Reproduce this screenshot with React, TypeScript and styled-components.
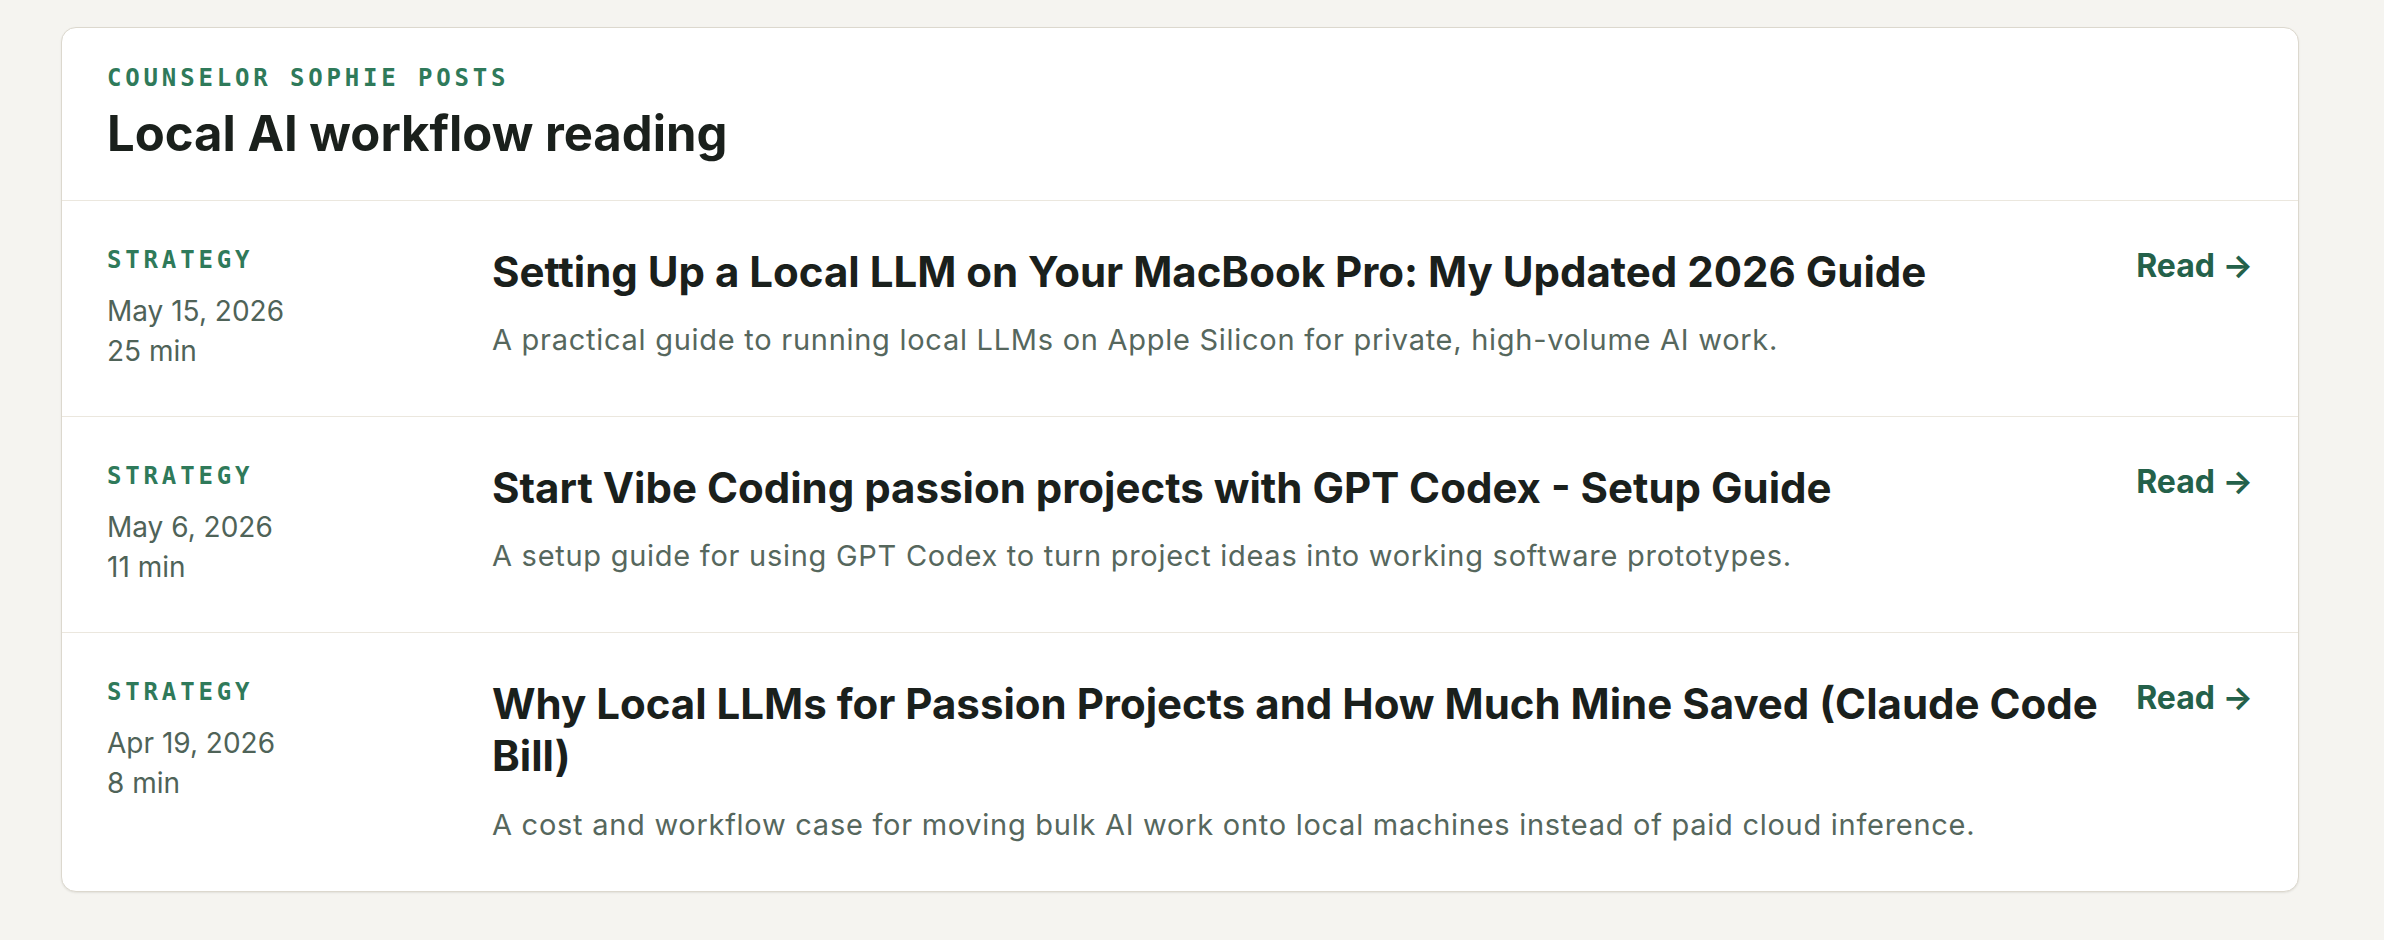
import React from 'react';
import styled, { createGlobalStyle } from 'styled-components';

const GlobalStyle = createGlobalStyle`
    html, body {
        margin: 0;
        padding: 0;
        background: #f5f4f0;
    }
    body {
        font-family: Inter, 'Noto Sans', sans-serif;
        color: #1a201c;
    }
`;

const Page = styled.div`
    padding: 27px 61px 40px;
`;

const Card = styled.section`
    max-width: 2236px;
    background: #ffffff;
    border: 1px solid #dcd8ce;
    border-radius: 15px;
    box-shadow: 0 1px 2px rgba(60, 55, 40, 0.1);
    overflow: hidden;
`;

const Header = styled.header`
    padding: 36px 45px 36px;
    border-bottom: 1px solid #ebe7de;
`;

const Eyebrow = styled.div`
    font-family: 'DejaVu Sans Mono', 'Liberation Mono', monospace;
    font-weight: 700;
    font-size: 24px;
    letter-spacing: 0.16em;
    text-transform: uppercase;
    color: #2f7a5a;
`;

const Heading = styled.h2`
    margin: 13px 0 0;
    font-size: 49px;
    line-height: 1.2;
    font-weight: 700;
    color: #1a201c;
`;

const List = styled.ul`
    list-style: none;
    margin: 0;
    padding: 0;
`;

const Row = styled.li`
    display: grid;
    grid-template-columns: 365px 1fr auto;
    column-gap: 20px;
    padding: 45px;
    border-top: 1px solid #ebe7de;

    &:first-child {
        border-top: none;
    }
`;

const Meta = styled.div`
    display: flex;
    flex-direction: column;
`;

const Category = styled.span`
    font-family: 'DejaVu Sans Mono', 'Liberation Mono', monospace;
    font-weight: 700;
    font-size: 24px;
    letter-spacing: 0.16em;
    text-transform: uppercase;
    color: #2f7a5a;
    margin-bottom: 17px;
`;

const MetaLine = styled.span`
    font-size: 28px;
    line-height: 40px;
    color: #4f6358;
`;

const Body = styled.div`
    min-width: 0;
`;

const PostTitle = styled.h3`
    margin: 0;
    font-size: 42px;
    line-height: 1.25;
    font-weight: 700;
    color: #1a201c;
`;

const Summary = styled.p`
    margin: 20px 0 0;
    font-size: 29px;
    line-height: 1.5;
    letter-spacing: 0.025em;
    color: #56675d;
`;

const ReadLink = styled.a`
    align-self: start;
    margin-top: 1px;
    font-size: 32px;
    line-height: 1.2;
    font-weight: 700;
    color: #24614a;
    text-decoration: none;
    white-space: nowrap;
    cursor: pointer;
`;

type Post = {
    category: string;
    date: string;
    minutes: number;
    title: string;
    summary: string;
};

const posts: Post[] = [
    {
        category: 'Strategy',
        date: 'May 15, 2026',
        minutes: 25,
        title: 'Setting Up a Local LLM on Your MacBook Pro: My Updated 2026 Guide',
        summary:
            'A practical guide to running local LLMs on Apple Silicon for private, high-volume AI work.',
    },
    {
        category: 'Strategy',
        date: 'May 6, 2026',
        minutes: 11,
        title: 'Start Vibe Coding passion projects with GPT Codex - Setup Guide',
        summary:
            'A setup guide for using GPT Codex to turn project ideas into working software prototypes.',
    },
    {
        category: 'Strategy',
        date: 'Apr 19, 2026',
        minutes: 8,
        title: 'Why Local LLMs for Passion Projects and How Much Mine Saved (Claude Code Bill)',
        summary:
            'A cost and workflow case for moving bulk AI work onto local machines instead of paid cloud inference.',
    },
];

function PostRow({ post }: { post: Post }) {
    return (
        <Row>
            <Meta>
                <Category>{post.category}</Category>
                <MetaLine>{post.date}</MetaLine>
                <MetaLine>{post.minutes} min</MetaLine>
            </Meta>
            <Body>
                <PostTitle>{post.title}</PostTitle>
                <Summary>{post.summary}</Summary>
            </Body>
            <ReadLink>Read →</ReadLink>
        </Row>
    );
}

export default function App() {
    return (
        <>
            <GlobalStyle />
            <Page>
                <Card>
                    <Header>
                        <Eyebrow>Counselor Sophie posts</Eyebrow>
                        <Heading>Local AI workflow reading</Heading>
                    </Header>
                    <List>
                        {posts.map((post) => (
                            <PostRow key={post.title} post={post} />
                        ))}
                    </List>
                </Card>
            </Page>
        </>
    );
}
